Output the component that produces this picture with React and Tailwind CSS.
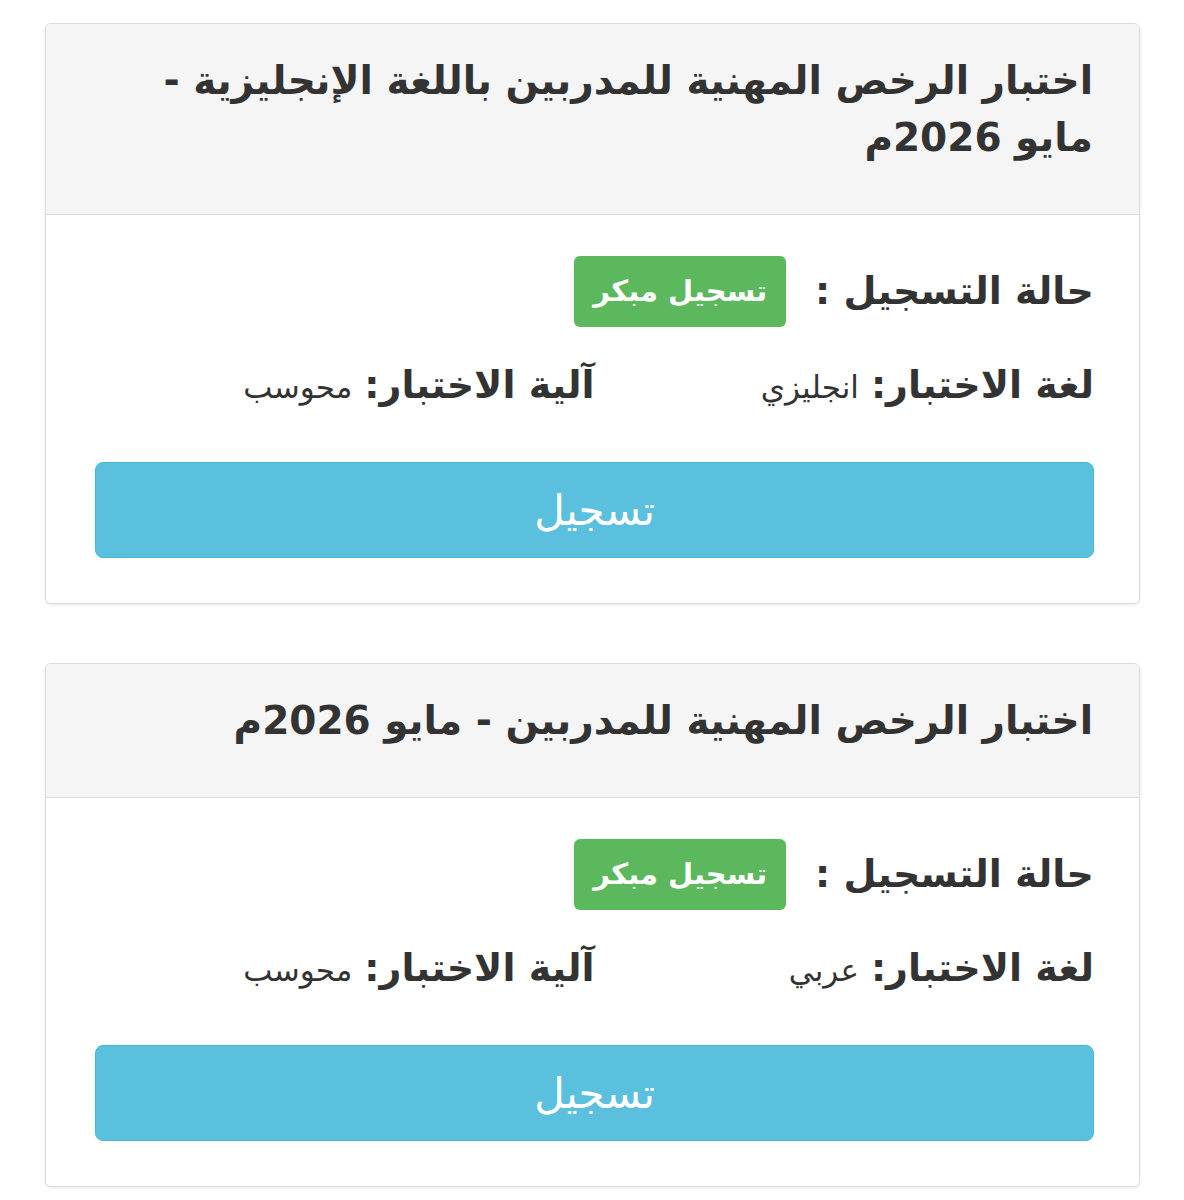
import React from 'react';

const exams = [
  {
    title: 'اختبار الرخص المهنية للمدربين باللغة الإنجليزية - مايو 2026م',
    lang: 'انجليزي',
    mode: 'محوسب',
  },
  {
    title: 'اختبار الرخص المهنية للمدربين - مايو 2026م',
    lang: 'عربي',
    mode: 'محوسب',
  },
];

const ExamCard = ({ exam }) => (
  <div className="border border-[#dddddd] rounded-md bg-white shadow-[0_1px_3px_rgba(0,0,0,0.1)] overflow-hidden">
    {/* Header */}
    <div className="bg-[#f5f5f5] border-b border-[#dddddd] pr-[46px] pl-[90px] pt-[28px] pb-[48px]">
      <h3 className="text-[39px] leading-[57px] font-bold text-[#333333]">{exam.title}</h3>
    </div>

    {/* Body */}
    <div className="pr-[45px] pl-[49px] pt-[41px] pb-[45px]">
      <div className="flex items-center gap-[29px]">
        <span className="text-[38px] font-bold text-[#333333]">حالة التسجيل :</span>
        <span className="bg-[#5cb85c] text-white text-[29px] font-bold rounded-md h-[71px] px-[19px] flex items-center">
          تسجيل مبكر
        </span>
      </div>

      <div className="grid grid-cols-2 mt-[22px] h-[72px] items-center">
        <div className="flex items-baseline gap-3">
          <span className="text-[38px] font-bold text-[#333333]">لغة الاختبار:</span>
          <span className="text-[31px] text-[#333333]">{exam.lang}</span>
        </div>
        <div className="flex items-baseline gap-3">
          <span className="text-[38px] font-bold text-[#333333]">آلية الاختبار:</span>
          <span className="text-[31px] text-[#333333]">{exam.mode}</span>
        </div>
      </div>

      <button className="mt-[41px] w-full h-[96px] bg-[#5bc0de] border border-[#46b8da] rounded-lg text-white text-[42px] flex items-center justify-center">
        تسجيل
      </button>
    </div>
  </div>
);

export default function App() {
  return (
    <div
      dir="rtl"
      className="bg-white min-h-[1200px] pl-[45px] pr-[44px] pt-[23px] flex flex-col gap-[59px] font-['DejaVu_Sans',sans-serif]"
    >
      {exams.map((exam, idx) => (
        <ExamCard key={idx} exam={exam} />
      ))}
    </div>
  );
}
